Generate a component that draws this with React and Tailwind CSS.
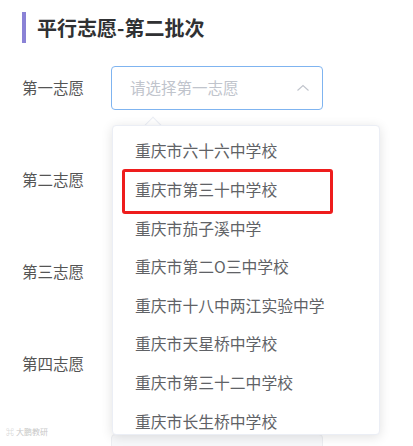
const schools = [
  "重庆市六十六中学校",
  "重庆市第三十中学校",
  "重庆市茄子溪中学",
  "重庆市第二O三中学校",
  "重庆市十八中两江实验中学",
  "重庆市天星桥中学校",
  "重庆市第三十二中学校",
  "重庆市长生桥中学校",
];

// last row is only the top edge of the next select, its label sits below the fold
const rows = ["第一志愿", "第二志愿", "第三志愿", "第四志愿", ""];

// ─── Chevron ──────────────────────────────────────────────────────────────────

function ChevronUp() {
  return (
    <svg className="w-[14px] h-[10px]" viewBox="0 0 14 10" fill="none">
      <path d="M1.5 7.5 7 2.5l5.5 5" stroke="#c0c4cc" strokeWidth="1.1" />
    </svg>
  );
}

// ─── Dropdown ─────────────────────────────────────────────────────────────────

function Dropdown() {
  return (
    <div className="absolute left-[1px] top-[calc(100%+15px)] w-[268px] z-10">
      {/* arrow */}
      <div className="absolute -top-[6px] left-[35px] w-[12px] h-[12px] rotate-45 bg-white border-l border-t border-[#ebeef5]" />
      <div className="relative h-[310px] overflow-hidden rounded-[4px] bg-white border border-[#ebeef5] shadow-[0_2px_12px_rgba(0,0,0,0.12)] pt-[6px]">
        {schools.map((s) => (
          <div
            key={s}
            className="h-[38.6px] flex items-center pl-[22px] text-[15.8px] text-[#606266] whitespace-nowrap"
          >
            {s}
          </div>
        ))}
      </div>
    </div>
  );
}

// ─── App ──────────────────────────────────────────────────────────────────────

export default function App() {
  return (
    <div className="relative h-[446px] w-[413px] overflow-hidden bg-white font-['Noto_Sans_CJK_SC','Noto_Sans',sans-serif]">
      {/* Header */}
      <div className="flex items-center gap-[11px] pl-[22px] pt-[12px]">
        <div className="h-[31px] w-[4px] bg-[#8a82d6]" />
        <h1 className="text-[20px] leading-[31px] font-bold text-[#303133]">
          平行志愿-第二批次
        </h1>
      </div>

      {/* Form rows */}
      <div className="mt-[23px] flex flex-col gap-[48px] pl-[22px]">
        {rows.map((label, i) => (
          <div key={i} className="flex items-center h-[44px]">
            <span className="w-[89px] text-[15.5px] text-[#555]">{label}</span>
            <div className="relative">
              <div
                className={`w-[212px] h-[44px] rounded-[4px] border flex items-center justify-between pl-[18px] pr-[12px] ${
                  i === 0
                    ? "border-[#7fb4f0] bg-white"
                    : i === 4
                      ? "border-[#eceef2] bg-[#f7f8fa]"
                      : "border-transparent bg-white"
                }`}
              >
                <span className="text-[15.5px] text-[#c0c4cc]">
                  {i === 0 ? "请选择第一志愿" : ""}
                </span>
                {i === 0 && <ChevronUp />}
              </div>
              {i === 0 && <Dropdown />}
            </div>
          </div>
        ))}
      </div>

      {/* Annotation box */}
      <div className="absolute left-[122px] top-[169px] w-[211px] h-[45px] border-[3px] border-[#ee1d1d] rounded-[3px] z-20" />

      {/* Watermark */}
      <div className="absolute left-[6px] top-[428px] flex items-center gap-[2px] text-[8px] leading-none text-[#c8c8c8]">
        <span>⌘</span>
        <span>大鹏教研</span>
      </div>
    </div>
  );
}
